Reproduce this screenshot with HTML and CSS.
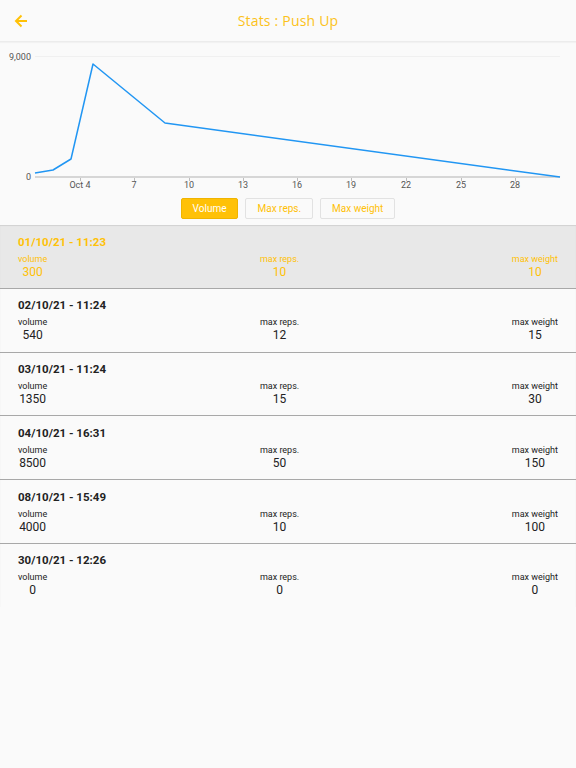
FILE: index.html
```html
<!DOCTYPE html>
<html>
<head>
<meta charset="utf-8">
<link rel="stylesheet" href="styles.css">
</head>
<body>
<header class="appbar">
  <span class="back">
    <svg width="14" height="14" viewBox="0 0 14 14"><path d="M13 7H2M7.5 1.5L2 7l5.5 5.5" fill="none" stroke="#ffc107" stroke-width="2"/></svg>
  </span>
  <h1 class="title">Stats : Push Up</h1>
</header>
<section class="chart">
  <svg width="576" height="152" viewBox="0 42 576 152">
    <line x1="35" y1="56.5" x2="560" y2="56.5" stroke="#f0f0f0" stroke-width="1"/>
    <text x="31" y="60" class="axis" text-anchor="end">9,000</text>
    <text x="31" y="180" class="axis" text-anchor="end">0</text>
    <line x1="35" y1="177" x2="560" y2="177" stroke="#d6d6d6" stroke-width="2"/>
    <g stroke="#bdbdbd" stroke-width="1">
      <line x1="80.5" y1="178" x2="80.5" y2="181"/>
      <line x1="134.5" y1="178" x2="134.5" y2="181"/>
      <line x1="189.5" y1="178" x2="189.5" y2="181"/>
      <line x1="243.5" y1="178" x2="243.5" y2="181"/>
      <line x1="297.5" y1="178" x2="297.5" y2="181"/>
      <line x1="351.5" y1="178" x2="351.5" y2="181"/>
      <line x1="406.5" y1="178" x2="406.5" y2="181"/>
      <line x1="461.5" y1="178" x2="461.5" y2="181"/>
      <line x1="515.5" y1="178" x2="515.5" y2="181"/>
    </g>
    <g class="axis" text-anchor="middle">
      <text x="80" y="188">Oct 4</text>
      <text x="134" y="188">7</text>
      <text x="189" y="188">10</text>
      <text x="243" y="188">13</text>
      <text x="297" y="188">16</text>
      <text x="351" y="188">19</text>
      <text x="406" y="188">22</text>
      <text x="461" y="188">25</text>
      <text x="515" y="188">28</text>
    </g>
    <polyline points="35,173 53,170 71,159 93,64 165,123 560,177" fill="none" stroke="#2196f3" stroke-width="1.5" stroke-linejoin="round"/>
  </svg>
  <div class="toggles">
    <button class="toggle active">Volume</button>
    <button class="toggle">Max reps.</button>
    <button class="toggle">Max weight</button>
  </div>
</section>
<ul class="list">
  <li class="row selected">
    <div class="date">01/10/21 - 11:23</div>
    <div class="cols">
      <div class="col"><span class="lbl">volume</span><span class="val">300</span></div>
      <div class="col"><span class="lbl">max reps.</span><span class="val">10</span></div>
      <div class="col"><span class="lbl">max weight</span><span class="val">10</span></div>
    </div>
  </li>
  <li class="row">
    <div class="date">02/10/21 - 11:24</div>
    <div class="cols">
      <div class="col"><span class="lbl">volume</span><span class="val">540</span></div>
      <div class="col"><span class="lbl">max reps.</span><span class="val">12</span></div>
      <div class="col"><span class="lbl">max weight</span><span class="val">15</span></div>
    </div>
  </li>
  <li class="row">
    <div class="date">03/10/21 - 11:24</div>
    <div class="cols">
      <div class="col"><span class="lbl">volume</span><span class="val">1350</span></div>
      <div class="col"><span class="lbl">max reps.</span><span class="val">15</span></div>
      <div class="col"><span class="lbl">max weight</span><span class="val">30</span></div>
    </div>
  </li>
  <li class="row">
    <div class="date">04/10/21 - 16:31</div>
    <div class="cols">
      <div class="col"><span class="lbl">volume</span><span class="val">8500</span></div>
      <div class="col"><span class="lbl">max reps.</span><span class="val">50</span></div>
      <div class="col"><span class="lbl">max weight</span><span class="val">150</span></div>
    </div>
  </li>
  <li class="row">
    <div class="date">08/10/21 - 15:49</div>
    <div class="cols">
      <div class="col"><span class="lbl">volume</span><span class="val">4000</span></div>
      <div class="col"><span class="lbl">max reps.</span><span class="val">10</span></div>
      <div class="col"><span class="lbl">max weight</span><span class="val">100</span></div>
    </div>
  </li>
  <li class="row last">
    <div class="date">30/10/21 - 12:26</div>
    <div class="cols">
      <div class="col"><span class="lbl">volume</span><span class="val">0</span></div>
      <div class="col"><span class="lbl">max reps.</span><span class="val">0</span></div>
      <div class="col"><span class="lbl">max weight</span><span class="val">0</span></div>
    </div>
  </li>
</ul>
</body>
</html>
```
FILE: styles.css
```css
html, body {
  margin: 0;
  padding: 0;
  background: #fafafa;
  font-family: Roboto, "Liberation Sans", sans-serif;
  width: 576px;
  height: 768px;
  overflow: hidden;
}
.appbar {
  position: relative;
  height: 41px;
  border-bottom: 1px solid #ececec;
  box-shadow: 0 1px 1px rgba(0,0,0,0.03);
  display: flex;
  align-items: center;
  justify-content: center;
}
.back {
  position: absolute;
  left: 14px;
  top: 14px;
  width: 14px;
  height: 14px;
  display: flex;
}
.title {
  margin: 0;
  font-family: "Open Sans", sans-serif;
  font-weight: 400;
  font-size: 14px;
  color: #fcc21b;
  letter-spacing: 0.2px;
}
.chart svg {
  display: block;
}
.axis {
  font-family: Roboto, sans-serif;
  font-size: 9px;
  fill: #555;
}
.toggles {
  display: flex;
  justify-content: center;
  gap: 7px;
  padding: 4px 0 6px;
}
.toggle {
  height: 21px;
  box-sizing: border-box;
  padding: 0 11px;
  border: 1px solid #e2e2e2;
  border-radius: 2px;
  background: #fafafa;
  color: #ffc107;
  font-family: Roboto, sans-serif;
  font-size: 10px;
  cursor: pointer;
}
.toggle.active {
  background: #ffc107;
  border-color: #f0b400;
  color: #fff;
}
.list {
  list-style: none;
  margin: 0;
  padding: 0;
  box-shadow: inset 0 1px 1px rgba(0,0,0,0.12);
}
.row {
  padding: 9.5px 18px 9.25px;
  border-bottom: 1px solid #a8a8a8;
  color: #222;
}
.row.last {
  border-bottom: none;
}
.row.selected {
  background: #e8e8e8;
  color: #ffc107;
  box-shadow: inset 0 1px 1px rgba(0,0,0,0.1);
}
.date {
  font-size: 11.5px;
  font-weight: 700;
  line-height: 15px;
  margin-bottom: 4px;
}
.cols {
  display: flex;
  justify-content: space-between;
}
.col {
  display: flex;
  flex-direction: column;
  align-items: center;
}
.lbl {
  font-size: 9px;
  line-height: 11px;
}
.val {
  font-size: 12px;
  line-height: 14px;
}
```
